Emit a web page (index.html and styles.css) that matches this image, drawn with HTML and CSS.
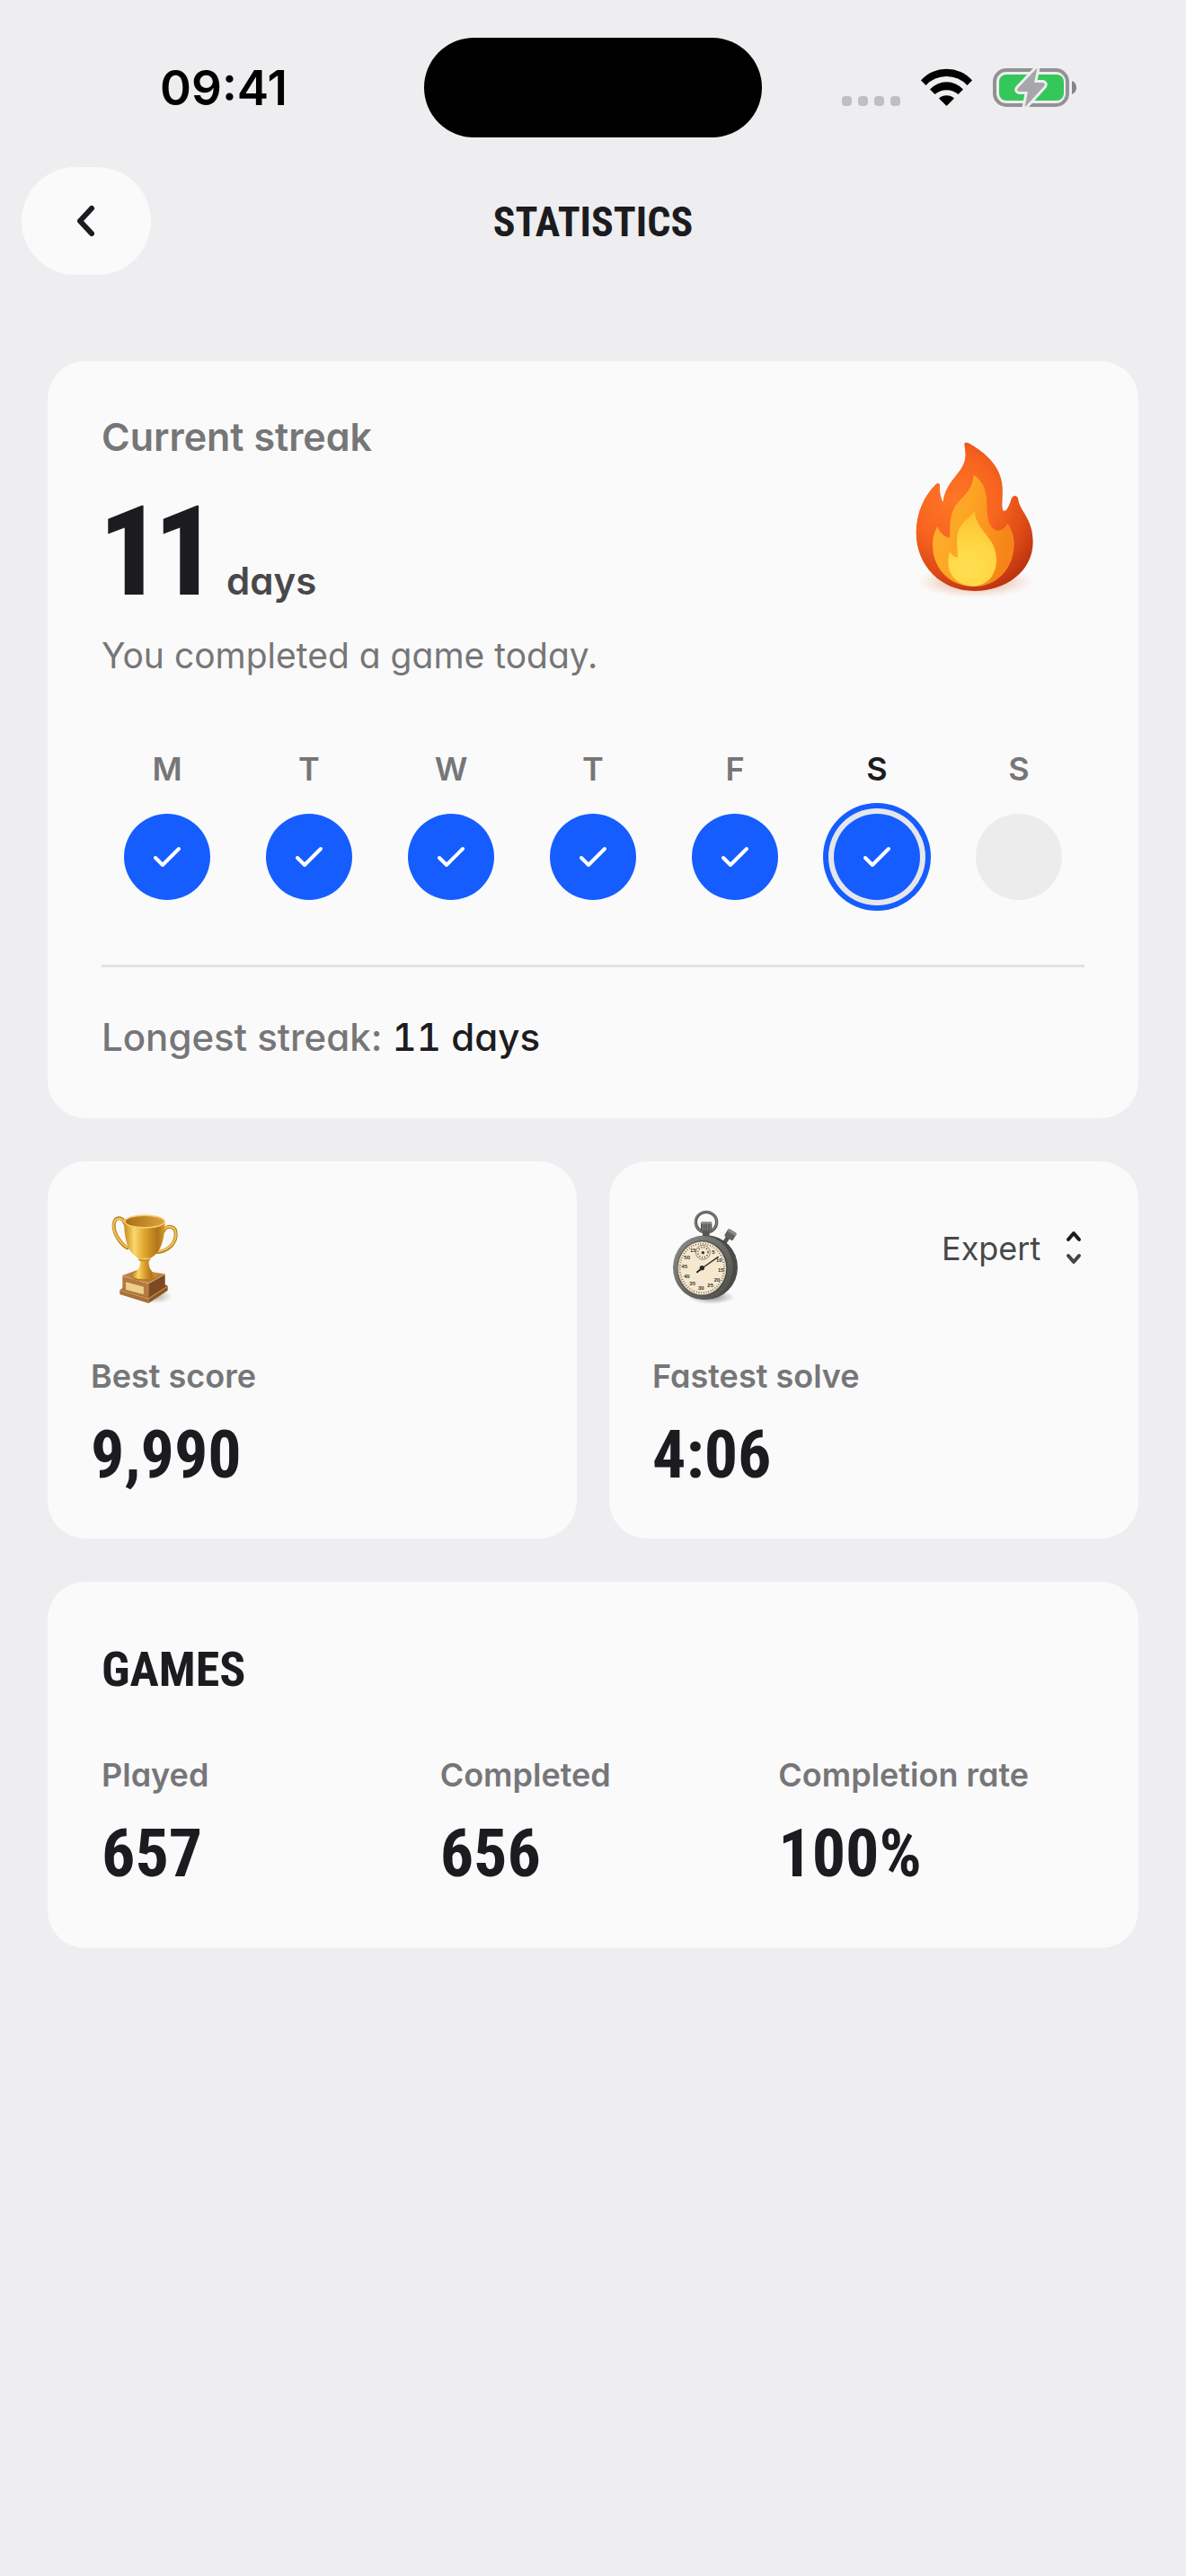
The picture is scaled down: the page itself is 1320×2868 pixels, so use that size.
FILE: index.html
```html
<!DOCTYPE html>
<html lang="en">
<head>
<meta charset="utf-8">
<meta name="viewport" content="width=device-width, initial-scale=1">
<title>Statistics</title>
<link rel="stylesheet" href="styles.css">
</head>
<body>
<svg class="defs" aria-hidden="true">
  <defs>
    <symbol id="check" viewBox="-24 -24 48 48">
      <path d="M-13 1 L-5 9 L13 -9" fill="none" stroke="#fff" stroke-width="4" stroke-linecap="round" stroke-linejoin="round"/>
    </symbol>
  </defs>
</svg>

<div class="status-bar">
  <time class="clock">09:41</time>
  <div class="island"></div>
  <svg class="status-icons" viewBox="930 70 270 54" role="img" aria-label="Wi-Fi connected, battery charging">
    <g fill="#bfbfc1">
      <rect x="937" y="106" width="11" height="11" rx="4"/>
      <rect x="955" y="106" width="11" height="11" rx="4"/>
      <rect x="973" y="106" width="11" height="11" rx="4"/>
      <rect x="991" y="106" width="11" height="11" rx="4"/>
    </g>
    <path d="M1025 88.5 A38 38 0 0 1 1082 88.5 L1076.5 94 A31.500 31.500 0 0 0 1030.500 94Z M1035 98.500 A25 25 0 0 1 1072 98.500 L1066.500 104 A20 20 0 0 0 1040.500 104Z M1045 108.500 A13 13 0 0 1 1062 108.500 L1053.500 117Z"/>
    <rect x="1107" y="77" width="81" height="39" rx="13" fill="none" stroke="#929294" stroke-width="4"/>
    <path d="M1193 89 Q1198 91 1198 96.500 Q1198 102 1193 104Z" fill="#858587"/>
    <rect x="1112" y="82" width="72" height="29" rx="8" fill="#34c759"/>
    <path d="M1153 76 Q1155 74 1154 77 L1151 91 L1161 91 Q1164 92 1162 95 L1142 117 Q1140 119 1141 116 L1144 101 L1134 101 Q1131 100 1133 97Z" fill="#a7a7a9" stroke="#eeeef0" stroke-width="6" stroke-linejoin="round" paint-order="stroke"/>
  </svg>
</div>

<header class="nav">
  <button class="back" type="button" aria-label="Back">
    <svg viewBox="-24 -24 48 48" width="48" height="48"><path d="M6 -14 L-7 0 L6 14" fill="none" stroke="#1c1c20" stroke-width="6" stroke-linecap="round" stroke-linejoin="round"/></svg>
  </button>
  <h1 class="nav-title">STATISTICS</h1>
</header>

<main class="content">
  <section class="card streak">
    <div class="streak-top">
      <div class="streak-text">
        <h2 class="streak-label">Current streak</h2>
        <p class="streak-count"><strong class="streak-number">11</strong><span class="streak-unit">days</span></p>
        <p class="streak-note">You completed a game today.</p>
      </div>
      <svg class="flame" viewBox="60 60 528 600" aria-hidden="true">
        <defs>
          <radialGradient id="fo" gradientUnits="userSpaceOnUse" cx="250" cy="290" r="330">
            <stop offset="0" stop-color="#ff7626"/><stop offset=".45" stop-color="#f7641f"/><stop offset=".75" stop-color="#dd4a16"/><stop offset="1" stop-color="#b93210"/>
          </radialGradient>
          <linearGradient id="fm" x1="0" x2="1" y1="0" y2=".3">
            <stop offset="0" stop-color="#ffb02e"/><stop offset=".5" stop-color="#fda423"/><stop offset="1" stop-color="#f58518"/>
          </linearGradient>
          <radialGradient id="fi" gradientUnits="userSpaceOnUse" cx="295" cy="520" r="190">
            <stop offset="0" stop-color="#ffe052"/><stop offset=".5" stop-color="#ffd542"/><stop offset="1" stop-color="#fcc02f"/>
          </radialGradient>
          <radialGradient id="fs">
            <stop offset="0" stop-color="#d8602c" stop-opacity=".7"/><stop offset="1" stop-color="#e8a080" stop-opacity="0"/>
          </radialGradient>
        </defs>
        <ellipse cx="320" cy="563" rx="195" ry="54" fill="url(#fs)"/>
        <path fill="url(#fo)" d="M283 104 C283 98 290 97 297 100 C350 130 405 175 410 245 C412 285 406 312 412 325 C420 332 432 315 440 285 C445 273 458 273 462 284 C468 330 512 350 512 430 C512 530 420 594 316 594 C205 594 122 510 122 400 C122 330 150 275 188 237 C196 231 202 236 201 244 C200 265 205 285 212 297 C218 240 255 215 275 180 C290 155 287 130 283 104Z"/>
        <path fill="url(#fm)" d="M314 206 C345 225 358 260 358 300 C358 350 365 385 390 392 C408 394 420 380 427 368 C440 385 450 410 449 440 C447 520 390 579 316 579 C235 579 178 520 177 440 C177 415 185 393 193 378 C198 395 215 415 234 416 C236 380 232 350 250 315 C270 280 310 265 314 206Z"/>
        <path fill="url(#fi)" d="M317 325 C322 400 390 410 390 490 C390 545 355 577 313 578 C262 577 229 540 229 500 C229 485 231 472 235 463 C240 475 250 480 260 482 C262 460 256 440 259 410 C265 365 305 350 317 325Z"/>
      </svg>
    </div>

    <ol class="week">
      <li class="day"><span>M</span><div class="dot done"><svg class="tick"><use href="#check"/></svg></div></li>
      <li class="day"><span>T</span><div class="dot done"><svg class="tick"><use href="#check"/></svg></div></li>
      <li class="day"><span>W</span><div class="dot done"><svg class="tick"><use href="#check"/></svg></div></li>
      <li class="day"><span>T</span><div class="dot done"><svg class="tick"><use href="#check"/></svg></div></li>
      <li class="day"><span>F</span><div class="dot done"><svg class="tick"><use href="#check"/></svg></div></li>
      <li class="day today" aria-current="date"><span>S</span><div class="dot done"><svg class="tick"><use href="#check"/></svg></div></li>
      <li class="day"><span>S</span><div class="dot"></div></li>
    </ol>

    <p class="longest">Longest streak: <strong>11 days</strong></p>
  </section>

  <div class="records">
    <section class="card record">
      <div class="record-top">
        <svg class="record-icon" viewBox="-27 3 360 360" aria-hidden="true">
          <defs>
            <linearGradient id="gold" x1="0" x2="1">
              <stop offset="0" stop-color="#c98a1c"/><stop offset=".25" stop-color="#fbd76c"/><stop offset=".5" stop-color="#dfa52f"/><stop offset=".82" stop-color="#b0741a"/><stop offset="1" stop-color="#d69a2c"/>
            </linearGradient>
            <linearGradient id="bowl" x1="0" x2="1">
              <stop offset="0" stop-color="#a86f18"/><stop offset="1" stop-color="#dca33a"/>
            </linearGradient>
            <radialGradient id="ts"><stop offset="0" stop-color="#7a6040" stop-opacity=".5"/><stop offset="1" stop-color="#7a6040" stop-opacity="0"/></radialGradient>
          </defs>
          <ellipse cx="190" cy="310" rx="55" ry="24" fill="url(#ts)"/>
          <path fill="#8b5726" d="M166 309 L221 270 L230 275 L230 290 L166 333Z"/>
          <path fill="#a96f38" d="M70 289 L80 281 L166 309 L166 333 L70 303Z"/>
          <path fill="none" stroke="#d39a58" stroke-width="3" d="M71 290 L166 318 L229 277"/>
          <path fill="#b57a40" d="M79 242 L166 268 L166 312 L79 286Z"/>
          <path fill="#7c4a20" d="M166 268 L221 237 L221 278 L166 312Z"/>
          <path fill="#ba8045" stroke="#c78e52" stroke-width="2" stroke-linejoin="round" d="M79 241 L130 222 L221 236 L166 266Z"/>
          <path fill="#ecd08c" stroke="#a46b2f" stroke-width="2" d="M89 260 L151 277 L151 305 L89 289Z"/>
          <g fill="none" stroke-linecap="round">
            <path stroke="#b97e1e" stroke-width="12" d="M87 66 C77 42 51 42 50 74 C50 100 72 135 95 148 M216 92 C226 70 259 72 257 106 C255 138 225 160 196 162"/>
            <path stroke="#f3c555" stroke-width="6" d="M86 64 C76 44 51 44 49 74 C49 100 72 133 94 146 M216 90 C226 70 259 72 257 106 C255 136 225 158 196 160"/>
          </g>
          <ellipse cx="151" cy="245" rx="42" ry="14" fill="#b77a1d"/>
          <ellipse cx="151" cy="240" rx="40" ry="13" fill="url(#gold)"/>
          <path fill="url(#gold)" d="M138 186 C140 213 130 224 113 236 Q150 254 189 236 C172 224 165 213 167 186Z"/>
          <path fill="url(#gold)" d="M84 60 C86 128 96 166 140 187 L164 187 C206 168 219 128 221 60Z"/>
          <ellipse cx="152" cy="187" rx="21" ry="6" fill="#c78b25"/>
          <ellipse cx="152" cy="184" rx="20" ry="4" fill="#efc258"/>
          <ellipse cx="153" cy="60" rx="69" ry="23" fill="#f5ce6b"/>
          <ellipse cx="153" cy="60" rx="64" ry="18" fill="url(#bowl)"/>
        </svg>
      </div>
      <h2 class="stat-label">Best score</h2>
      <p class="stat-value">9,990</p>
    </section>

    <section class="card record">
      <div class="record-top">
        <svg class="record-icon" viewBox="-12 3 360 360" aria-hidden="true">
          <defs>
            <linearGradient id="metal" x1="0" x2="1" y1="0" y2="1">
              <stop offset="0" stop-color="#8f8f8a"/><stop offset=".5" stop-color="#6b6b67"/><stop offset="1" stop-color="#4b4b48"/>
            </linearGradient>
            <radialGradient id="ws"><stop offset="0" stop-color="#333" stop-opacity=".55"/><stop offset="1" stop-color="#333" stop-opacity="0"/></radialGradient>
          </defs>
          <ellipse cx="185" cy="312" rx="78" ry="24" fill="url(#ws)"/>
          <ellipse cx="168" cy="62" rx="35" ry="34" fill="none" stroke="#5b5b57" stroke-width="10"/>
          <ellipse cx="167" cy="61" rx="36" ry="35" fill="none" stroke="#92928d" stroke-width="3"/>
          <g transform="rotate(32 246 106)">
            <rect x="238" y="112" width="14" height="30" fill="#555551"/>
            <rect x="231" y="88" width="33" height="29" rx="5" fill="#62625e"/>
            <rect x="231" y="88" width="33" height="10" rx="5" fill="#8c8c87"/>
          </g>
          <rect x="156" y="88" width="23" height="24" fill="#565652"/>
          <rect x="150" y="62" width="37" height="31" rx="6" fill="#575753"/>
          <path stroke="#898984" stroke-width="3" d="M157 68V90M165 68V91M173 68V91M181 68V90"/>
          <rect x="150" y="61" width="37" height="7" rx="3" fill="#8d8d88"/>
          <ellipse cx="168" cy="213" rx="105" ry="107" fill="#4a4a47"/>
          <ellipse cx="157" cy="214" rx="100" ry="107" fill="url(#metal)"/>
          <ellipse cx="155" cy="216" rx="84" ry="92" fill="#44443f"/>
          <ellipse cx="154" cy="216" rx="81" ry="89" fill="#d8cdb8"/>
          <ellipse cx="154" cy="216" rx="78" ry="87" fill="#f6e8cf"/>
          <ellipse cx="154" cy="216" rx="74" ry="82" fill="none" stroke="#4a463e" stroke-width="6" stroke-dasharray="2 6.200"/>
          <circle cx="157" cy="163" r="24" fill="#f6e8cf" stroke="#5b564c" stroke-width="2"/>
          <circle cx="157" cy="163" r="17" fill="none" stroke="#5b564c" stroke-width="6" stroke-dasharray="3 6"/>
          <circle cx="157" cy="164" r="5" fill="#33312d"/>
          <g class="dial">
            <text x="124" y="163">15</text><text x="192" y="167">5</text><text x="211" y="194">10</text><text x="217" y="227">15</text><text x="204" y="260">20</text><text x="182" y="280">25</text><text x="151" y="287">30</text><text x="122" y="274">35</text><text x="103" y="249">40</text><text x="95" y="217">45</text><text x="104" y="185">50</text>
          </g>
          <path stroke="#2b2a28" stroke-width="4" stroke-linecap="round" d="M154 216 L208 178"/>
          <path stroke="#2b2a28" stroke-width="6" stroke-linecap="round" d="M138 229 L154 216"/>
          <circle cx="154" cy="215" r="8" fill="#2b2a28"/>
        </svg>
        <div class="picker">
          <select class="picker-select" aria-label="Difficulty"><option>Expert</option></select>
          <svg class="picker-arrows" viewBox="0 0 24 40" aria-hidden="true">
            <g fill="none" stroke-width="4" stroke-linecap="round" stroke-linejoin="round">
              <path stroke="#1c1c20" d="M6 11 L12 4 L18 11"/><path stroke="#444446" d="M6 29 L12 36 L18 29"/>
            </g>
          </svg>
        </div>
      </div>
      <h2 class="stat-label">Fastest solve</h2>
      <p class="stat-value">4:06</p>
    </section>
  </div>

  <section class="card games">
    <h2 class="games-title">GAMES</h2>
    <dl class="totals">
      <div><dt class="stat-label">Played</dt><dd class="stat-value">657</dd></div>
      <div><dt class="stat-label">Completed</dt><dd class="stat-value">656</dd></div>
      <div><dt class="stat-label">Completion rate</dt><dd class="stat-value">100%</dd></div>
    </dl>
  </section>
</main>
</body>
</html>
```
FILE: styles.css
```css
:root {
  --page: #eeeef0;
  --surface: #fafafa;
  --ink: #1c1c20;
  --muted: #767678;
  --blue: #155dff;
  --display: "Roboto Condensed", Roboto, sans-serif;
  --body: Inter, "Liberation Sans", sans-serif;
}

* { box-sizing: border-box; }

body {
  margin: 0;
  min-height: 100vh;
  background: var(--page);
  color: var(--ink);
  font-family: var(--body);
  font-feature-settings: "cv11";
  line-height: 48px;
}

h1, h2, p, ol, dl, dd { margin: 0; padding: 0; }

.defs { position: absolute; width: 0; height: 0; }

/* Status bar */
.status-bar {
  display: grid;
  grid-template-columns: 1fr 376px 1fr;
  align-items: center;
  padding: 42px 0 33px;
}
.clock {
  padding-left: 26px;
  text-align: center;
  font-size: 53px;
  font-weight: 600;
  color: #000;
}
.island { height: 111px; border-radius: 56px; background: #000; }
.status-icons { width: 270px; height: 54px; justify-self: end; margin-right: 120px; }

/* Navigation */
.nav {
  display: grid;
  grid-template-columns: 144px 1fr 144px;
  align-items: center;
  padding: 0 24px;
}
.back {
  display: flex;
  align-items: center;
  justify-content: center;
  height: 120px;
  padding: 0;
  border: 0;
  border-radius: 60px;
  background: var(--surface);
}
.nav-title {
  padding-top: 2px;
  text-align: center;
  font-family: var(--display);
  font-size: 46px;
  font-weight: 700;
}

/* Cards */
.content { display: grid; gap: 48px; padding: 96px 53px; }
.card { border-radius: 42px; background: var(--surface); }

/* Streak */
.streak { padding: 60px 60px 66px; }
.streak-top { display: flex; justify-content: space-between; }
.streak-label { font-size: 43px; font-weight: 600; color: var(--muted); line-height: 48px; }
.streak-count { display: flex; align-items: baseline; gap: 16px; margin: 34px 0 22px; }
.streak-number {
  font-family: var(--display);
  font-size: 140px;
  font-weight: 800;
  line-height: 140px;
  font-feature-settings: "pnum";
}
.streak-unit { font-size: 42px; font-weight: 600; color: #48484a; }
.streak-note { font-size: 39px; color: var(--muted); }
.flame { flex: none; width: 176px; height: 200px; margin: 18px 32px 0 0; }

.week {
  display: grid;
  grid-template-columns: repeat(7, 1fr);
  gap: 12px;
  margin-top: 78px;
  list-style: none;
}
.day {
  display: grid;
  justify-items: center;
  gap: 26px;
  font-size: 36px;
  font-weight: 600;
  color: var(--muted);
}
.dot {
  display: flex;
  align-items: center;
  justify-content: center;
  width: 96px;
  height: 96px;
  border-radius: 50%;
  background: #ececec;
}
.dot.done { background: var(--blue); }
.today { color: var(--ink); }
.today .dot { box-shadow: 0 0 0 6px #e6e6ea, 0 0 0 12px var(--blue); }
.tick { width: 48px; height: 48px; }

.longest {
  margin-top: 72px;
  padding-top: 54px;
  border-top: 3px solid #e1e1e2;
  font-size: 42px;
  font-weight: 500;
  color: var(--muted);
}
.longest strong { font-weight: 500; color: var(--ink); font-feature-settings: "cv11", "tnum"; }

/* Records */
.records { display: grid; grid-template-columns: 1fr 1fr; gap: 36px; }
.record { padding: 48px 60px 57px 48px; }
.record-top { display: flex; justify-content: space-between; margin-bottom: 47px; }
.record-icon { flex: none; width: 120px; height: 120px; }
.dial {
  font-family: "Liberation Sans", sans-serif;
  font-size: 18px;
  font-weight: 700;
  fill: #33312d;
  text-anchor: middle;
}
.stat-label { font-size: 36px; font-weight: 600; color: var(--muted); line-height: 48px; }
.stat-value {
  margin-top: 28px;
  font-family: var(--display);
  font-size: 74px;
  font-weight: 700;
  line-height: 72px;
}

.picker { position: relative; height: 96px; }
.picker-select {
  appearance: none;
  height: 98px;
  padding: 0 48px 0 0;
  border: 0;
  background: none;
  color: #48484a;
  font: 400 36px var(--body);
}
.picker-arrows {
  position: absolute;
  top: 28px;
  right: 0;
  width: 24px;
  height: 40px;
  pointer-events: none;
}

/* Totals */
.games { padding: 60px 60px 69px; }
.games-title {
  font-family: var(--display);
  font-size: 54px;
  font-weight: 700;
  line-height: 76px;
}
.totals { display: grid; grid-template-columns: repeat(3, 1fr); gap: 36px; margin-top: 55px; }
```
